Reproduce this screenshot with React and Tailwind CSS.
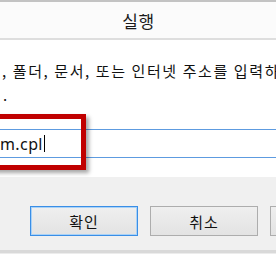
export default function App() {
  const kr = { fontFamily: '"Noto Sans CJK KR", "Noto Sans", sans-serif' };
  return (
    <div className="relative w-[276px] h-[260px] overflow-hidden bg-white" style={kr}>
      {/* 제목 표시줄 */}
      <div className="h-[2px] bg-[#c3c3c3]"></div>
      <div className="h-[36px] bg-[#fbfbfb] flex items-center justify-center">
        <span className="text-[17px] leading-none text-[#1a1a1a] pl-[1px] tracking-[0.5px]">실행</span>
      </div>
      <div className="h-[2px] bg-[#dedede]"></div>

      {/* 본문 */}
      <div className="h-[137px] bg-white flex flex-col">
        <div className="pt-[22px] pl-[2px] whitespace-nowrap text-[15px] leading-[18px] tracking-[1.6px] text-[#111]">
          , 폴더, 문서, 또는 인터넷 주소를 입력하여
        </div>
        <div className="mt-[6px] pl-[3px] text-[15px] leading-[18px] text-[#111]">.</div>
        <div className="mt-[25px] h-[29px] border-y border-[#5d9be0] flex items-center">
          <span className="text-[16px] leading-none text-[#111] tracking-[0.4px]" style={{ fontFamily: '"Noto Sans", sans-serif' }}>m.cpl</span>
          <span className="ml-[1px] w-[1px] h-[17px] bg-black"></span>
        </div>
      </div>

      {/* 하단 버튼 영역 */}
      <div className="h-[73px] bg-[#f0f0f0] flex items-start pl-[30px] pt-[29px] gap-[12px]">
        <button className="w-[108px] h-[30px] shrink-0 border border-[#3a8ee6] shadow-[inset_0_0_0_1px_#a9d2f7] bg-linear-to-b from-[#efefef] to-[#e3e3e3] text-[15px] leading-none text-[#111] tracking-[1px]">
          확인
        </button>
        <button className="w-[108px] h-[30px] shrink-0 border border-[#adadad] bg-linear-to-b from-[#efefef] to-[#e3e3e3] text-[15px] leading-none text-[#111] tracking-[1px]">
          취소
        </button>
        <button className="w-[108px] h-[30px] shrink-0 border border-[#adadad] bg-linear-to-b from-[#efefef] to-[#e3e3e3]"></button>
      </div>
      <div className="h-[3px] bg-[#d9d9d9]"></div>
      <div className="h-[7px] bg-white border-t border-[#ececec]"></div>

      {/* 강조 표시 (빨간 상자) */}
      <div className="absolute left-[-12px] top-[114px] w-[98px] h-[56px] border-[5px] border-[#c00000] shadow-[3px_3px_4px_rgba(0,0,0,0.35)]"></div>
    </div>
  );
}
